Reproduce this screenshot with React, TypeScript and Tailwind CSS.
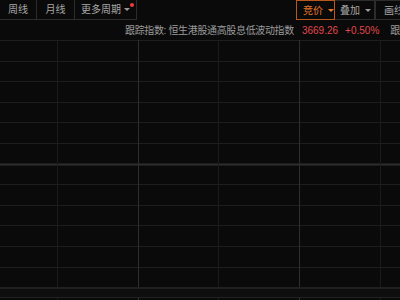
import { Fragment } from 'react'

const FONT = { fontFamily: '"Liberation Sans", "Noto Sans CJK SC", sans-serif' }

// horizontal grid rows start at y=0 of the chart pane, step ~20.6px
const H_LINES = Array.from({ length: 12 }, (_, i) => Math.round(i * 20.6))
const V_LINES = [57, 138, 218, 299, 380]

function Caret({ color = 'border-t-[#9a9a9a]' }: { color?: string }) {
  return <span className={`inline-block w-0 h-0 border-x-[3px] border-x-transparent border-t-[3px] ${color}`} />
}

export default function App() {
  return (
    <div className="w-[400px] h-[300px] bg-[#0a0a0a] overflow-hidden flex flex-col text-[10px]" style={FONT}>
      {/* ── TOOLBAR ── */}
      <div className="h-5 flex shrink-0 text-[#a8a8a8] whitespace-nowrap">
        <div className="w-[37px] shrink-0 h-5 flex items-center justify-center border-r border-b border-[#2c2c2c]">周线</div>
        <div className="w-[38px] shrink-0 h-5 flex items-center justify-center border-r border-b border-[#2c2c2c]">月线</div>
        <div className="relative w-[62px] shrink-0 h-5 flex items-center pl-[6px] gap-[3px] border-r border-b border-[#2c2c2c]">
          <span>更多周期</span>
          <Caret />
          <span className="absolute left-[55px] top-[3px] w-[4px] h-[4px] rounded-full bg-[#f03c3c]" />
        </div>

        <div className="ml-[159px] flex shrink-0">
          <div className="w-[39px] shrink-0 h-5 flex items-center pl-[6px] gap-[5px] border border-[#b8581c] text-[#e8782a]">
            <span>竞价</span>
            <Caret color="border-t-[#e8782a]" />
          </div>
          <div className="w-[40px] shrink-0 h-5 flex items-center pl-[5px] gap-[5px] border-y border-r border-[#2c2c2c]">
            <span>叠加</span>
            <Caret />
          </div>
          <div className="w-[40px] shrink-0 h-5 flex items-center pl-[8px] border-y border-l border-[#2c2c2c]">画线</div>
        </div>
      </div>

      {/* ── INDEX INFO ROW ── */}
      <div className="h-5 shrink-0 flex items-center pl-[125px] whitespace-nowrap">
        <span className="shrink-0 text-[#9c9c9c] tracking-[-0.35px]">跟踪指数: 恒生港股通高股息低波动指数</span>
        <span className="shrink-0 ml-[8px] text-[#e0474c]">3669.26</span>
        <span className="shrink-0 ml-[7px] text-[#e0474c]">+0.50%</span>
        <span className="shrink-0 ml-[11px] text-[#9c9c9c]">跟踪</span>
      </div>

      {/* ── CHART GRID ── */}
      <div className="flex-1">
        <svg width="400" height="260" className="block">
          {H_LINES.map((y, i) => (
            <line key={y} x1="0" x2="400" y1={y + 0.5} y2={y + 0.5}
              stroke={i === 6 ? '#2e2e2e' : '#1e1e1e'} strokeWidth={i === 6 ? 2 : 1} />
          ))}
          {V_LINES.map((x, i) => (
            <Fragment key={x}>
              <line x1={x + 0.5} x2={x + 0.5} y1="0" y2="248" stroke={i % 2 ? '#2e2e2e' : '#1b1b1b'} />
              <line x1={x + 0.5} x2={x + 0.5} y1="258" y2="260" stroke={i % 2 ? '#2e2e2e' : '#1b1b1b'} />
            </Fragment>
          ))}
          <rect x="0" y="247" width="400" height="2" fill="#202020" />
          <rect x="0" y="249" width="400" height="8" fill="#0e0e0e" />
          <line x1="0" x2="400" y1="257.5" y2="257.5" stroke="#222222" />
        </svg>
      </div>
    </div>
  )
}
